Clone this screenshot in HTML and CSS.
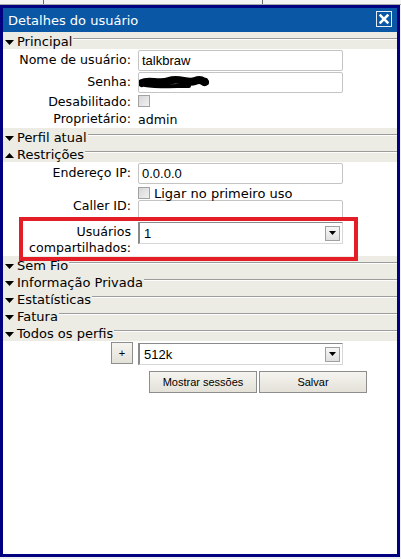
FILE: index.html
```html
<!DOCTYPE html>
<html lang="pt">
<head>
<meta charset="utf-8">
<title>Detalhes do usuário</title>
<link rel="stylesheet" href="styles.css">
</head>
<body>
<div class="bg-strip"><span class="tick t1"></span><span class="tick t2"></span></div>
<div class="window">
  <div class="titlebar">
    <span class="title">Detalhes do usuário</span>
    <span class="close"><svg width="16" height="16" viewBox="0 0 16 16"><rect x="0.5" y="0.5" width="15" height="15" fill="none" stroke="#e4ecf6" stroke-width="1"/><path d="M4.6 4.6 L11.4 11.4 M11.4 4.6 L4.6 11.4" stroke="#fff" stroke-width="2.6" stroke-linecap="square"/></svg></span>
  </div>
  <div class="content">
    <div class="sec"><svg class="tri" width="9" height="5" viewBox="0 0 9 5"><polygon points="0,0 9,0 4.5,5" fill="#000"/></svg><span class="sec-label">Principal</span><span class="sec-line"></span></div>
    <div class="form">
      <div class="lbl">Nome de usuário:</div>
      <div class="cell"><div class="input">talkbraw</div></div>
      <div class="lbl">Senha:</div>
      <div class="cell"><div class="input pw"><svg width="70" height="18" viewBox="0 0 70 18"><path d="M3 9 C 10 5, 20 11, 30 7 S 48 10, 56 7 S 64 9, 66 8" stroke="#000" stroke-width="8" fill="none" stroke-linecap="round"/><path d="M6 11 C 18 13, 35 12, 50 12" stroke="#000" stroke-width="4" fill="none" stroke-linecap="round"/></svg></div></div>
      <div class="lbl short">Desabilitado:</div>
      <div class="cell short"><span class="chk"></span></div>
      <div class="lbl short">Proprietário:</div>
      <div class="cell short txt">admin</div>
    </div>
    <div class="sec"><svg class="tri" width="9" height="5" viewBox="0 0 9 5"><polygon points="0,0 9,0 4.5,5" fill="#000"/></svg><span class="sec-label">Perfil atual</span><span class="sec-line"></span></div>
    <div class="sec"><svg class="tri" width="9" height="5" viewBox="0 0 9 5"><polygon points="0,5 9,5 4.5,0" fill="#000"/></svg><span class="sec-label">Restrições</span><span class="sec-line"></span></div>
    <div class="restr">
      <div class="form">
        <div class="lbl">Endereço IP:</div>
        <div class="cell"><div class="input">0.0.0.0</div></div>
        <div class="lbl mid">Caller ID:</div>
        <div class="cell">
          <div class="checkline"><span class="chk"></span><span class="chk-text">Ligar no primeiro uso</span></div>
          <div class="input"></div>
        </div>
        <div class="lbl top">Usuários<br>compartilhados:</div>
        <div class="cell top"><div class="select"><span class="sel-val">1</span><span class="drop"><svg width="7" height="4" viewBox="0 0 7 4"><polygon points="0,0 7,0 3.5,4" fill="#000"/></svg></span></div></div>
      </div>
      <div class="highlight"></div>
    </div>
    <div class="sec"><svg class="tri" width="9" height="5" viewBox="0 0 9 5"><polygon points="0,0 9,0 4.5,5" fill="#000"/></svg><span class="sec-label">Sem Fio</span><span class="sec-line"></span></div>
    <div class="sec"><svg class="tri" width="9" height="5" viewBox="0 0 9 5"><polygon points="0,0 9,0 4.5,5" fill="#000"/></svg><span class="sec-label">Informação Privada</span><span class="sec-line"></span></div>
    <div class="sec"><svg class="tri" width="9" height="5" viewBox="0 0 9 5"><polygon points="0,0 9,0 4.5,5" fill="#000"/></svg><span class="sec-label">Estatísticas</span><span class="sec-line"></span></div>
    <div class="sec"><svg class="tri" width="9" height="5" viewBox="0 0 9 5"><polygon points="0,0 9,0 4.5,5" fill="#000"/></svg><span class="sec-label">Fatura</span><span class="sec-line"></span></div>
    <div class="sec"><svg class="tri" width="9" height="5" viewBox="0 0 9 5"><polygon points="0,0 9,0 4.5,5" fill="#000"/></svg><span class="sec-label">Todos os perfis</span><span class="sec-line"></span></div>
    <div class="form profiles">
      <div class="cell plus-cell"><button class="btn plus">+</button></div>
      <div class="cell"><div class="select"><span class="sel-val">512k</span><span class="drop"><svg width="7" height="4" viewBox="0 0 7 4"><polygon points="0,0 7,0 3.5,4" fill="#000"/></svg></span></div></div>
    </div>
    <div class="actions">
      <button class="btn wide">Mostrar sessões</button>
      <button class="btn wide">Salvar</button>
    </div>
  </div>
</div>
</body>
</html>
```
FILE: styles.css
```css
html, body {
  margin: 0;
  padding: 0;
}
body {
  width: 401px;
  height: 559px;
  overflow: hidden;
  background: #eeeeee;
  font-family: "DejaVu Sans", sans-serif;
  color: #000;
}
.bg-strip {
  height: 4px;
  border-bottom: 1px solid #a8a8a8;
  background: #f4f4f4;
  display: flex;
}
.tick {
  width: 1px;
  height: 4px;
  background: #6a6a6a;
}
.t1 { margin-left: 43px; }
.t2 { margin-left: 218px; }

.window {
  width: 394px;
  height: 546px;
  border: 3px solid #000080;
  display: flex;
  flex-direction: column;
}
.titlebar {
  height: 24px;
  flex: none;
  background: #0a58a5;
  color: #fff;
  display: flex;
  align-items: center;
  justify-content: space-between;
  padding: 0 5px 0 5px;
  font-size: 13px;
}
.title {
  padding-top: 1px;
}
.close {
  display: flex;
  margin-top: -2px;
}
.content {
  flex: 1;
  background: #fff;
}

.sec {
  height: 17px;
  background: #ecebe4;
  display: flex;
  align-items: flex-start;
}
.tri {
  flex: none;
  margin: 8px 3px 0 2px;
}
.sec-label {
  font-size: 13px;
  line-height: 15px;
  padding-top: 2px;
  white-space: nowrap;
  position: relative;
  z-index: 1;
}
.sec-line {
  flex: 1;
  margin: 6px 0 0 1px;
  border-top: 1px solid #9c9c9c;
  border-bottom: 1px solid #fdfdfd;
}

.form {
  display: grid;
  grid-template-columns: 128px 205px;
  column-gap: 7px;
  font-size: 12.6px;
}
.lbl {
  text-align: right;
  align-self: center;
  line-height: 16px;
  white-space: nowrap;
}
.lbl.mid {
  padding-top: 6px;
}
.lbl.top {
  align-self: start;
  padding-top: 3px;
}
.cell {
  min-height: 22px;
}
.cell.short {
  min-height: 17px;
}
.txt {
  line-height: 17px;
  padding-top: 1px;
}
.input {
  box-sizing: border-box;
  height: 21px;
  margin-top: 1px;
  border: 1px solid #c4c4c4;
  border-radius: 2px;
  padding-left: 3px;
  font-family: "Liberation Sans", Arial, sans-serif;
  font-size: 13px;
  line-height: 19px;
  background: #fff;
}
.pw {
  padding-left: 0;
  display: flex;
  align-items: center;
}
.pw svg {
  filter: blur(0.4px);
}
.chk {
  display: block;
  flex: none;
  box-sizing: border-box;
  width: 12px;
  height: 12px;
  margin-top: 2px;
  border: 1px solid #a2a2a2;
  background: linear-gradient(135deg, #d6d6d6, #f1f1f1);
}
.checkline {
  height: 15px;
  display: flex;
  align-items: flex-start;
}
.checkline .chk {
  margin-top: 3px;
}
.chk-text {
  margin-left: 4px;
  font-size: 13px;
  line-height: 16px;
  margin-top: 2px;
}

.restr {
  position: relative;
}
.highlight {
  position: absolute;
  left: 16px;
  top: 55px;
  width: 339px;
  height: 44px;
  box-sizing: border-box;
  border: 4px solid #e31e26;
  pointer-events: none;
}

.select {
  box-sizing: border-box;
  height: 22px;
  margin-top: 1px;
  border-style: solid;
  border-width: 1px 1px 1px 2px;
  border-color: #8a8a8a #d8d8d8 #d8d8d8 #8a8a8a;
  display: flex;
  align-items: center;
  font-family: "Liberation Sans", Arial, sans-serif;
  font-size: 13px;
  background: #fff;
}
.sel-val {
  flex: 1;
  padding-left: 4px;
}
.drop {
  box-sizing: border-box;
  width: 15px;
  height: 15px;
  margin-right: 2px;
  border: 1px solid #a0a0a0;
  background: linear-gradient(#f7f7f7, #e0e0e0);
  display: flex;
  align-items: center;
  justify-content: center;
}

.profiles {
  margin-top: 1px;
}
.plus-cell {
  justify-self: end;
  margin-right: -2px;
}
.btn {
  box-sizing: border-box;
  border: 1px solid #8e8e8e;
  background: linear-gradient(#f5f4ef, #e3e1d8);
  font-family: "Liberation Sans", Arial, sans-serif;
  font-size: 11px;
  color: #000;
  padding: 0;
  margin: 0;
}
.plus {
  width: 22px;
  height: 22px;
}
.actions {
  display: flex;
  gap: 2px;
  padding-left: 146px;
  margin-top: 6px;
}
.wide {
  width: 108px;
  height: 22px;
}
```
